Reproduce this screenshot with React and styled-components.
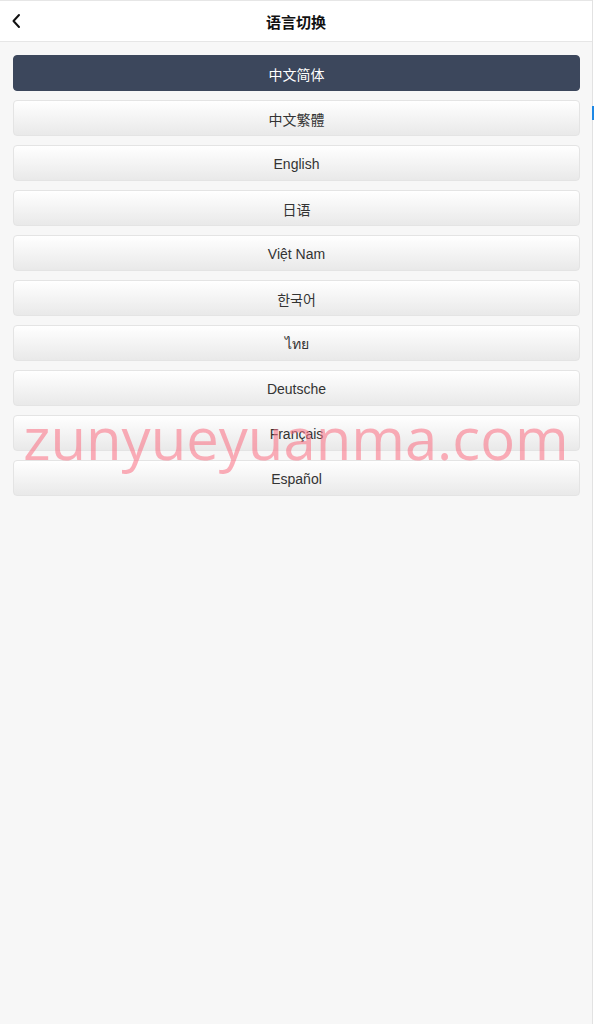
import styled, { createGlobalStyle } from "styled-components";

const GlobalStyle = createGlobalStyle`
    html, body {
        margin: 0;
        padding: 0;
        background: #ffffff;
    }
    * {
        box-sizing: border-box;
    }
`;

const Page = styled.div`
    position: relative;
    width: 593px;
    min-height: 1024px;
    background: #f7f7f7;
    border-right: 1px solid #e2e2e2;
    font-family: "Liberation Sans", Arial, "Noto Sans CJK SC", sans-serif;
`;

const Header = styled.header`
    display: flex;
    align-items: center;
    justify-content: center;
    position: relative;
    height: 42px;
    background: #ffffff;
    border-top: 1px solid #e6e6e6;
    border-bottom: 1px solid #e6e6e6;
`;

const BackButton = styled.button`
    position: absolute;
    left: 7px;
    top: 50%;
    transform: translateY(-50%);
    display: flex;
    align-items: center;
    justify-content: center;
    width: 18px;
    height: 24px;
    padding: 0;
    border: none;
    background: none;
`;

const Title = styled.h1`
    margin: 0;
    font-size: 15px;
    font-weight: 700;
    color: #111111;
    font-family: "Noto Sans CJK SC", sans-serif;
`;

const LangList = styled.div`
    display: flex;
    flex-direction: column;
    gap: 9px;
    padding: 13px 12px 13px 13px;
`;

const LangButton = styled.button`
    display: flex;
    align-items: center;
    justify-content: center;
    height: 36px;
    width: 100%;
    padding: 2px 0 0;
    border-radius: 4px;
    font-size: 14px;
    font-family: "Liberation Sans", Arial, "Noto Sans CJK SC", sans-serif;
    cursor: pointer;
    ${(props) =>
        props.active
            ? `
        background: #3c475c;
        border: 1px solid #3c475c;
        color: #ffffff;
    `
            : `
        background: linear-gradient(to bottom, #ffffff 0%, #e9e9e9 100%);
        border: 1px solid #e4e4e4;
        color: #333333;
    `}
`;

/* watermark sits over the list, so it is the one absolute text */
const Watermark = styled.div`
    position: absolute;
    left: 0;
    right: 0;
    top: 409px;
    text-align: center;
    font-family: "Open Sans", "Noto Sans", sans-serif;
    font-size: 58px;
    font-weight: 400;
    line-height: 1;
    color: rgba(250, 115, 135, 0.58);
    pointer-events: none;
    white-space: nowrap;
`;

const ScrollMark = styled.div`
    position: absolute;
    right: -2px;
    top: 106px;
    width: 2px;
    height: 14px;
    background: #1e88e5;
`;

const languages = [
    "中文简体",
    "中文繁體",
    "English",
    "日语",
    "Việt Nam",
    "한국어",
    "ไทย",
    "Deutsche",
    "Français",
    "Español",
];

function App() {
    return (
        <>
            <GlobalStyle />
            <Page>
                <Header>
                    <BackButton aria-label="back">
                        <svg width="10" height="16" viewBox="0 0 10 16" fill="none">
                            <path
                                d="M8 2L2.5 8L8 14"
                                stroke="#111"
                                strokeWidth="2"
                                strokeLinecap="round"
                                strokeLinejoin="round"
                            />
                        </svg>
                    </BackButton>
                    <Title>语言切换</Title>
                </Header>

                <LangList>
                    {languages.map((lang, i) => (
                        <LangButton key={lang} active={i === 0}>
                            {lang}
                        </LangButton>
                    ))}
                </LangList>

                <Watermark>zunyueyuanma.com</Watermark>
                <ScrollMark />
            </Page>
        </>
    );
}

export default App;
